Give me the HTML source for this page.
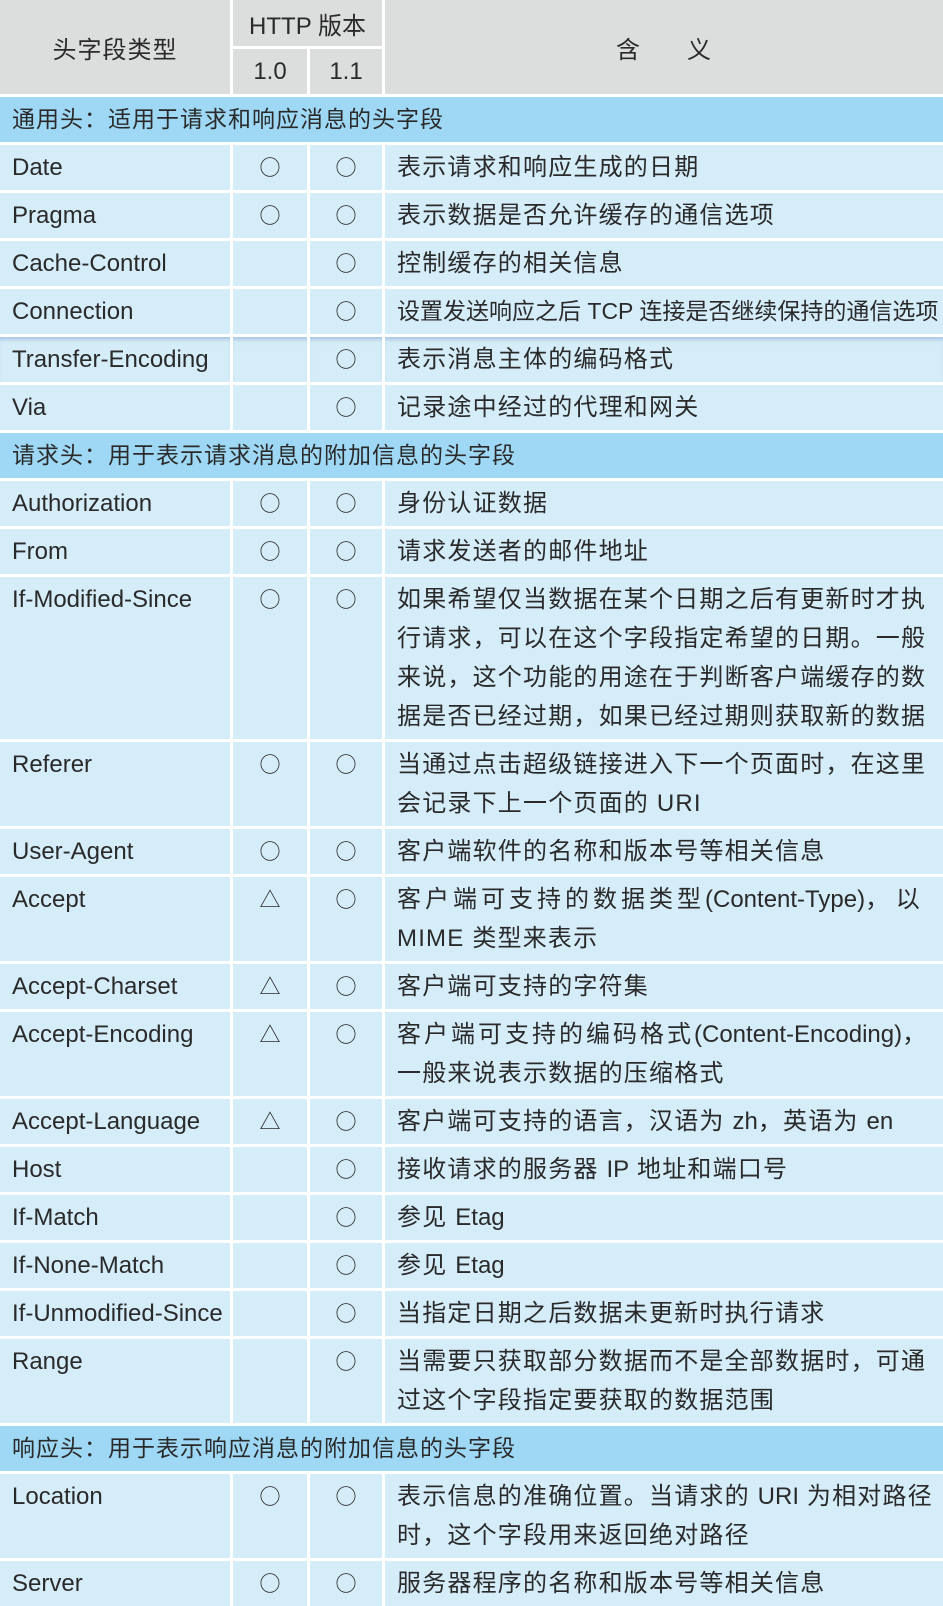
<!DOCTYPE html>
<html><head><meta charset="utf-8"><style>
*{margin:0;padding:0;box-sizing:border-box}
body{width:943px;height:1605px;background:#fff;overflow:hidden;font-family:"Liberation Sans","Noto Sans CJK SC",sans-serif;color:#2a2a2a;font-size:24px}
.r{display:grid;grid-template-columns:230px 74px 72px 1fr;column-gap:3px;margin-top:3px}
.r>div{background:#d5ecf9;padding-top:3px;line-height:39px;height:100%}
.r>div:first-child{padding-left:12px}
.r>div.c{text-align:center;font-family:"Noto Sans CJK SC",sans-serif;font-size:21px}
.r>div.m{padding-left:12px;letter-spacing:1.2px;white-space:nowrap;font-size:24px}
.s{margin-top:3px;background:#9fd8f5;height:45px;line-height:45px;padding-left:12px;letter-spacing:1px;font-size:23px}
.h1{height:45px}.h2{height:84px}.h4{height:162px}
.hd{display:grid;grid-template-columns:230px 74px 72px 1fr;grid-template-rows:46px 45px;gap:3px;height:94px}
.hd>div{background:#dcdddd;display:flex;align-items:center;justify-content:center;font-size:24px}
.sh{box-shadow:inset 0 5px 5px -3px rgba(120,160,200,.6)}
</style></head><body>
<div class="hd">
<div style="grid-row:1/3;letter-spacing:1px">头字段类型</div>
<div style="grid-column:2/4">HTTP 版本</div>
<div style="grid-row:1/3;grid-column:4;letter-spacing:1px">含&nbsp;&nbsp;&nbsp;&nbsp;&nbsp;&nbsp;义</div>
<div>1.0</div><div>1.1</div>
</div>
<div class="s">通用头：适用于请求和响应消息的头字段</div>
<div class="r h1"><div>Date</div><div class="c">○</div><div class="c">○</div><div class="m">表示请求和响应生成的日期</div></div>
<div class="r h1"><div>Pragma</div><div class="c">○</div><div class="c">○</div><div class="m">表示数据是否允许缓存的通信选项</div></div>
<div class="r h1"><div>Cache-Control</div><div class="c"></div><div class="c">○</div><div class="m">控制缓存的相关信息</div></div>
<div class="r h1"><div>Connection</div><div class="c"></div><div class="c">○</div><div class="m" style="letter-spacing:0;font-size:23px">设置发送响应之后 TCP 连接是否继续保持的通信选项</div></div>
<div class="r h1"><div class="sh">Transfer-Encoding</div><div class="c sh"></div><div class="c sh">○</div><div class="m sh">表示消息主体的编码格式</div></div>
<div class="r h1"><div>Via</div><div class="c"></div><div class="c">○</div><div class="m">记录途中经过的代理和网关</div></div>
<div class="s">请求头：用于表示请求消息的附加信息的头字段</div>
<div class="r h1"><div>Authorization</div><div class="c">○</div><div class="c">○</div><div class="m">身份认证数据</div></div>
<div class="r h1"><div>From</div><div class="c">○</div><div class="c">○</div><div class="m">请求发送者的邮件地址</div></div>
<div class="r h4"><div>If-Modified-Since</div><div class="c">○</div><div class="c">○</div><div class="m">如果希望仅当数据在某个日期之后有更新时才执<br>行请求，可以在这个字段指定希望的日期。一般<br>来说，这个功能的用途在于判断客户端缓存的数<br>据是否已经过期，如果已经过期则获取新的数据</div></div>
<div class="r h2"><div>Referer</div><div class="c">○</div><div class="c">○</div><div class="m">当通过点击超级链接进入下一个页面时，在这里<br>会记录下上一个页面的 URI</div></div>
<div class="r h1"><div>User-Agent</div><div class="c">○</div><div class="c">○</div><div class="m">客户端软件的名称和版本号等相关信息</div></div>
<div class="r h2"><div>Accept</div><div class="c">△</div><div class="c">○</div><div class="m"><span style="letter-spacing:4px">客户端可支持的数据类型</span><span style="letter-spacing:0">(Content-Type)， 以</span><br>MIME 类型来表示</div></div>
<div class="r h1"><div>Accept-Charset</div><div class="c">△</div><div class="c">○</div><div class="m">客户端可支持的字符集</div></div>
<div class="r h2"><div>Accept-Encoding</div><div class="c">△</div><div class="c">○</div><div class="m"><span style="letter-spacing:3px">客户端可支持的编码格式</span><span style="letter-spacing:0">(Content-Encoding)，</span><br>一般来说表示数据的压缩格式</div></div>
<div class="r h1"><div>Accept-Language</div><div class="c">△</div><div class="c">○</div><div class="m">客户端可支持的语言，汉语为 <span style="letter-spacing:0">zh</span>，英语为 <span style="letter-spacing:0">en</span></div></div>
<div class="r h1"><div>Host</div><div class="c"></div><div class="c">○</div><div class="m">接收请求的服务器 <span style="letter-spacing:0">IP</span> 地址和端口号</div></div>
<div class="r h1"><div>If-Match</div><div class="c"></div><div class="c">○</div><div class="m">参见 <span style="letter-spacing:0">Etag</span></div></div>
<div class="r h1"><div>If-None-Match</div><div class="c"></div><div class="c">○</div><div class="m">参见 <span style="letter-spacing:0">Etag</span></div></div>
<div class="r h1"><div>If-Unmodified-Since</div><div class="c"></div><div class="c">○</div><div class="m">当指定日期之后数据未更新时执行请求</div></div>
<div class="r h2"><div>Range</div><div class="c"></div><div class="c">○</div><div class="m">当需要只获取部分数据而不是全部数据时，可通<br>过这个字段指定要获取的数据范围</div></div>
<div class="s">响应头：用于表示响应消息的附加信息的头字段</div>
<div class="r h2"><div>Location</div><div class="c">○</div><div class="c">○</div><div class="m">表示信息的准确位置。当请求的 <span style="letter-spacing:0">URI</span> 为相对路径<br>时，这个字段用来返回绝对路径</div></div>
<div class="r h1"><div>Server</div><div class="c">○</div><div class="c">○</div><div class="m">服务器程序的名称和版本号等相关信息</div></div>
</body></html>
